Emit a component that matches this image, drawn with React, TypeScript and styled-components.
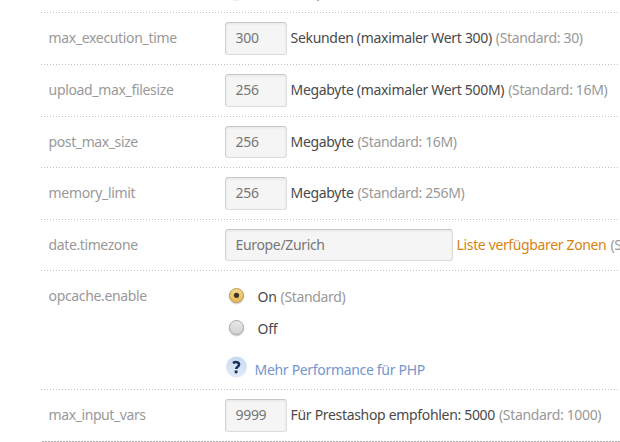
import React from "react";
import styled, { createGlobalStyle } from "styled-components";

const Global = createGlobalStyle`
  * { box-sizing: border-box; }
  body {
    margin: 0;
    background: #fff;
    overflow: hidden;
    font: 14px/20px "Noto Sans", sans-serif;
    letter-spacing: -0.33px;
    color: #4a4a4a;
  }
`;

const Page = styled.main`
  width: 620px;
  height: 442px;
  overflow: hidden;
  padding-left: 41px;
`;

const PreviousRow = styled.div`
  height: 12px;
  padding-left: 192px;
  display: flex;
  gap: 78px;
`;

const Remnant = styled.span<{ $w: number; $color: string }>`
  width: ${(p) => p.$w}px;
  height: 1px;
  background: ${(p) => p.$color};
`;

const dots = (color: string, on: number, period: number) =>
  `repeating-linear-gradient(to right, ${color} 0 ${on}px, transparent ${on}px ${period}px)`;

const Row = styled.div<{ $h: number }>`
  width: 640px;
  height: ${(p) => p.$h}px;
  display: flex;
  align-items: flex-start;
  padding: 10px 0 0 7.6px;
  white-space: nowrap;
  background: ${dots("#c0c0c0", 1, 3)} 0 0 / 100% 1px no-repeat;
`;

const Closing = styled.div`
  height: 1px;
  width: 640px;
  margin-left: 1px;
  background: ${dots("#aaa", 2, 3)};
`;

const Label = styled.label<{ $ls?: number }>`
  width: 176.4px;
  flex: none;
  padding-top: 6px;
  color: #999;
  letter-spacing: ${(p) => p.$ls ?? -0.34}px;
`;

const Field = styled.input<{ $wide?: boolean; $h?: number }>`
  width: ${(p) => (p.$wide ? 228 : 62)}px;
  height: ${(p) => p.$h ?? 33}px;
  flex: none;
  margin: 0 3.6px 0 0;
  padding: 0 9.6px ${(p) => (p.$h ? 1 : 2)}px;
  border: 1px solid #dcdcdc;
  border-top-color: #c8c8c8;
  border-left-color: #d0d0d0;
  border-radius: 3px;
  outline: none;
  background: #f5f5f5;
  box-shadow: inset 0 1px 3px #00000012;
  font: inherit;
  letter-spacing: -0.35px;
  color: #777;
`;

const Text = styled.div`
  padding-top: 6px;
`;

const Value = styled.span`
  letter-spacing: -0.32px;
`;

const Muted = styled.span`
  margin-left: 4px;
  color: #999;
  letter-spacing: -0.34px;
`;

const ZoneLink = styled.a`
  color: #d98310;
  letter-spacing: -0.36px;
`;

const Options = styled.div`
  display: flex;
  flex-direction: column;
`;

const Option = styled.label`
  height: 32px;
  display: flex;
  align-items: center;
`;

const Icon = styled.svg`
  width: 24px;
  height: 24px;
  flex: none;
  display: block;
`;

const OptionText = styled.span<{ $drop?: number }>`
  margin-left: 8.6px;
  padding-top: ${(p) => p.$drop ?? 1}px;
`;

const Help = styled.a`
  display: flex;
  align-items: center;
  margin-top: 12px;
  height: 24px;
  color: #7596ce;
`;

const HelpText = styled.span`
  margin: 3px 0 0 5.6px;
  letter-spacing: -0.32px;
`;

const Radio = ({ on }: { on?: boolean }) => (
  <Icon viewBox="0 0 24 24">
    <defs>
      <linearGradient id={on ? "gold" : "silver"} x1="0" y1="0" x2="0" y2="1">
        <stop stopColor={on ? "#f4d78d" : "#e8e8e8"} />
        <stop offset="1" stopColor={on ? "#e6b858" : "#d2d2d2"} />
      </linearGradient>
    </defs>
    <circle cx="11.5" cy="12.6" r="7.8" fill="#999" opacity=".4" />
    <circle cx="11.5" cy="11.5" r="7" fill={on ? "url(#gold)" : "url(#silver)"} stroke={on ? "#bd9a55" : "#a9a9a9"} />
    {on && <circle cx="11.5" cy="11.3" r="2.6" fill="#3c3526" />}
  </Icon>
);

const HelpIcon = () => (
  <Icon viewBox="0 0 24 24">
    <defs>
      <linearGradient id="help" x1="0" y1="0" x2="0" y2="1">
        <stop stopColor="#c7daf1" />
        <stop offset="1" stopColor="#e1ebf8" />
      </linearGradient>
    </defs>
    <circle cx="11.5" cy="11" r="10.5" fill="url(#help)" />
    <path d="M8 7.1C10.6 5.3 14.1 6 14.1 8.5c0 2.3-2.9 2.1-2.9 4.4" fill="none" stroke="#183158" strokeWidth="2.5" />
    <circle cx="11.1" cy="15.8" r="1.6" fill="#183158" />
  </Icon>
);

export default function App() {
  return (
    <>
      <Global />
      <Page>
        <PreviousRow>
          <Remnant $w={6} $color="#f0f0f0" />
          <Remnant $w={2} $color="#8eaddb" />
        </PreviousRow>
        <Row $h={52}>
          <Label>max_execution_time</Label>
          <Field defaultValue="300" />
          <Text><Value>Sekunden (maximaler Wert 300)</Value><Muted>(Standard: 30)</Muted></Text>
        </Row>
        <Row $h={52}>
          <Label>upload_max_filesize</Label>
          <Field defaultValue="256" />
          <Text><Value>Megabyte (maximaler Wert 500M)</Value><Muted>(Standard: 16M)</Muted></Text>
        </Row>
        <Row $h={51}>
          <Label $ls={-0.4}>post_max_size</Label>
          <Field $h={32} defaultValue="256" />
          <Text><Value>Megabyte</Value><Muted>(Standard: 16M)</Muted></Text>
        </Row>
        <Row $h={52}>
          <Label>memory_limit</Label>
          <Field defaultValue="256" />
          <Text><Value>Megabyte</Value><Muted>(Standard: 256M)</Muted></Text>
        </Row>
        <Row $h={51}>
          <Label $ls={-0.4}>date.timezone</Label>
          <Field $wide $h={32} defaultValue="Europe/Zurich" />
          <Text><ZoneLink>Liste verfügbarer Zonen</ZoneLink><Muted>(S</Muted></Text>
        </Row>
        <Row $h={119}>
          <Label $ls={-0.36}>opcache.enable</Label>
          <Options>
            <Option><Radio on /><OptionText>On<Muted>(Standard)</Muted></OptionText></Option>
            <Option><Radio /><OptionText $drop={2}>Off</OptionText></Option>
            <Help><HelpIcon /><HelpText>Mehr Performance für PHP</HelpText></Help>
          </Options>
        </Row>
        <Row $h={52}>
          <Label $ls={-0.42}>max_input_vars</Label>
          <Field defaultValue="9999" />
          <Text><Value>Für Prestashop empfohlen: 5000</Value><Muted>(Standard: 1000)</Muted></Text>
        </Row>
        <Closing />
      </Page>
    </>
  );
}
